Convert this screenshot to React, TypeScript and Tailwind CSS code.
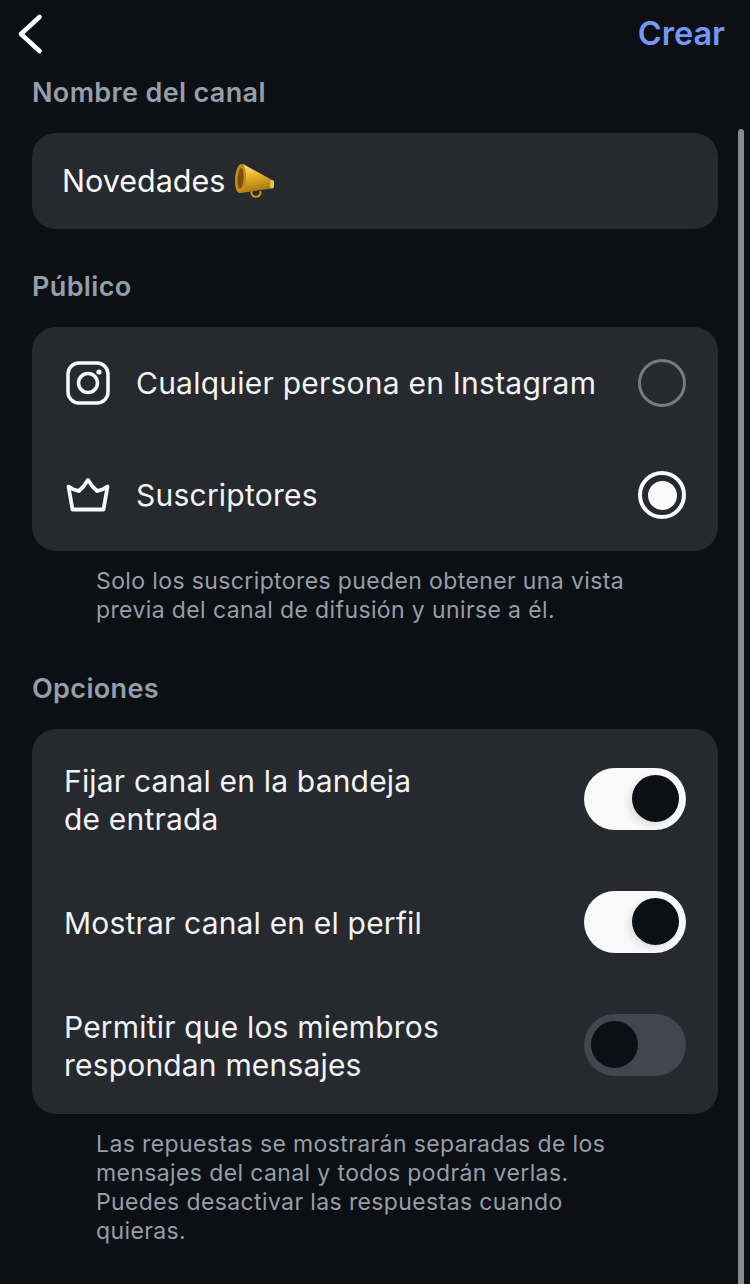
import React from "react";

const Toggle = ({ on }: { on: boolean }) => (
  <div
    className={`flex h-[62px] w-[102px] shrink-0 items-center rounded-full px-[7px] ${
      on ? "justify-end bg-[#fafafa]" : "justify-start bg-[#43464e]"
    }`}
  >
    <div
      className={`h-[47px] w-[47px] rounded-full bg-[#0c0f14] ${
        on ? "shadow-[-3px_3px_8px_rgba(0,0,0,0.12)]" : ""
      }`}
    />
  </div>
);

const Radio = ({ on }: { on: boolean }) => (
  <div
    className={`flex h-[48px] w-[48px] shrink-0 items-center justify-center rounded-full ${
      on ? "border-[4px] border-[#fafafa]" : "border-[3px] border-[#767b83]"
    }`}
  >
    {on && <div className="h-[29px] w-[29px] rounded-full bg-[#fafafa]" />}
  </div>
);

const Megaphone = () => (
  <svg width="42" height="36" viewBox="0 0 42 36" className="ml-[9px]">
    <defs>
      <linearGradient id="horn" x1="0" y1="0" x2="0.25" y2="1">
        <stop offset="0" stopColor="#fbe88e" />
        <stop offset="0.45" stopColor="#e8b82e" />
        <stop offset="1" stopColor="#a8780f" />
      </linearGradient>
    </defs>
    <path d="M18 28a4.500 4 0 1 0 8 0" fill="none" stroke="#c99a22" strokeWidth="2" />
    <path d="M9 1 38 17c2 1 2 8-.500 8.500L7 30z" fill="url(#horn)" />
    <ellipse cx="6.500" cy="15.500" rx="5.500" ry="14.500" transform="rotate(4 6.500 15.500)" fill="#c48a18" />
    <ellipse cx="6.500" cy="15.500" rx="3" ry="10.500" transform="rotate(4 6.500 15.500)" fill="#7a520a" />
    <rect x="36" y="17" width="4" height="8.500" rx="2" fill="#ecc043" />
  </svg>
);

const InstagramIcon = () => (
  <svg width="44" height="44" viewBox="0 0 44 44" fill="none" stroke="#fafafa" className="shrink-0">
    <rect x="2" y="2" width="40" height="40" rx="11" strokeWidth="3.500" />
    <circle cx="22" cy="22" r="9.500" strokeWidth="3.500" />
    <circle cx="33" cy="11" r="2.600" fill="#fafafa" stroke="none" />
  </svg>
);

const CrownIcon = () => (
  <svg width="44" height="34" viewBox="0 0 44 34" fill="none" stroke="#fafafa" className="shrink-0">
    <path
      d="M2.500 8.500C6 11 9 12.500 13 13 16.500 10 19.500 6 22 2 24.500 6 27.500 10 31 13 35 12.500 38 11 41.500 8.500L37.500 31.500H6.500z"
      strokeWidth="3.800"
      strokeLinejoin="round"
    />
  </svg>
);

const Label = ({ children }: { children: React.ReactNode }) => (
  <h2 className="pl-[32px] text-[27px] leading-[34px] font-semibold tracking-[0.35px] text-[#969ea9]">{children}</h2>
);

const Helper = ({ children }: { children: React.ReactNode }) => (
  <p className="pr-[100px] pl-[96px] text-[23px] leading-[29px] tracking-[0.38px] text-[#969ea9]">{children}</p>
);

const AudienceRow = ({ icon, text, on }: { icon: React.ReactNode; text: string; on: boolean }) => (
  <div className="flex h-[112px] items-center pr-[32px] pl-[34px]">
    <div className="flex w-[70px] items-center">{icon}</div>
    <span className="flex-1 text-[30px] tracking-[0.23px] text-[#f2f3f4]">{text}</span>
    <Radio on={on} />
  </div>
);

const OptionRow = ({ lines, on }: { lines: string[]; on: boolean }) => (
  <div className="flex h-[123px] items-center justify-between pr-[32px] pl-[32px]">
    <div className="pt-[2px] text-[30px] leading-[38px] tracking-[0.18px] text-[#f2f3f4]">
      {lines.map((l) => (
        <div key={l}>{l}</div>
      ))}
    </div>
    <Toggle on={on} />
  </div>
);

const App = () => {
  return (
    <div className="relative h-[1284px] w-[750px] overflow-hidden bg-[#0c0f14] font-['Inter','Liberation_Sans',sans-serif]">
      <header className="flex h-[76px] items-center justify-between pr-[25px] pb-[8px] pl-[18px]">
        <svg width="24" height="40" viewBox="0 0 24 40" fill="none" stroke="#fff" strokeWidth="4.500" strokeLinecap="round" strokeLinejoin="round">
          <path d="M21.500 3 3 20 21.500 37" />
        </svg>
        <button className="text-[32.500px] font-semibold text-[#7597f8]">Crear</button>
      </header>

      <Label>Nombre del canal</Label>
      <div className="mx-[32px] mt-[23px] flex h-[96px] items-center rounded-[24px] bg-[#26292e] pl-[30px] text-[30.5px] text-[#f8f8f8]">
        Novedades
        <Megaphone />
      </div>

      <div className="mt-[41px]">
        <Label>Público</Label>
      </div>
      <div className="mx-[32px] mt-[23px] rounded-[24px] bg-[#26292e]">
        <AudienceRow icon={<InstagramIcon />} text="Cualquier persona en Instagram" on={false} />
        <AudienceRow icon={<CrownIcon />} text="Suscriptores" on={true} />
      </div>
      <div className="mt-[16px]">
        <Helper>
          Solo los suscriptores pueden obtener una vista previa del canal de difusión y unirse a él.
        </Helper>
      </div>

      <div className="mt-[47px]">
        <Label>Opciones</Label>
      </div>
      <div className="mx-[32px] mt-[23px] h-[385px] rounded-[24px] bg-[#26292e] py-[8px]">
        <OptionRow lines={["Fijar canal en la bandeja", "de entrada"]} on={true} />
        <OptionRow lines={["Mostrar canal en el perfil"]} on={true} />
        <OptionRow lines={["Permitir que los miembros", "respondan mensajes"]} on={false} />
      </div>
      <div className="mt-[16px]">
        <Helper>
          Las repuestas se mostrarán separadas de los mensajes del canal y todos podrán verlas. Puedes desactivar las respuestas cuando quieras.
        </Helper>
      </div>

      {/* scrollbar overlay */}
      <div className="absolute top-[129px] right-[6px] bottom-0 w-[6px] rounded-t-full bg-[#8a8a8a]" />
    </div>
  );
};

export default App;
